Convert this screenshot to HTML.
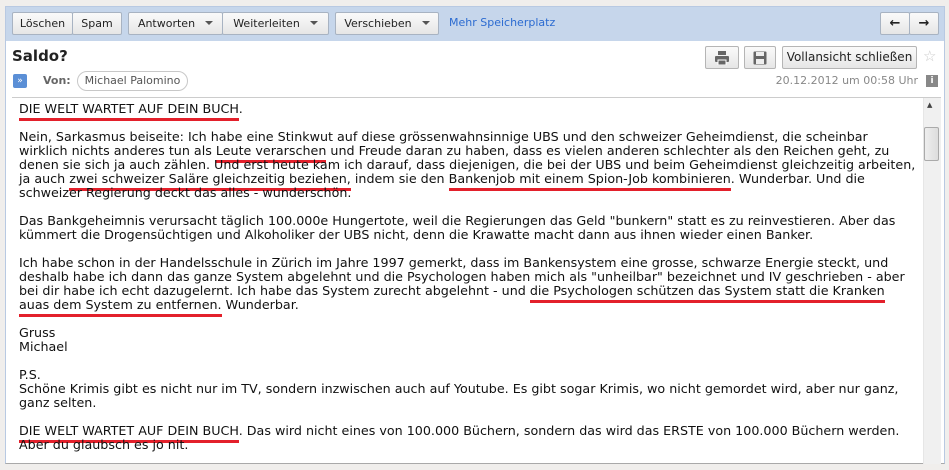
<!DOCTYPE html>
<html><head><meta charset="utf-8"><style>
*{margin:0;padding:0;box-sizing:border-box}
body{width:949px;height:470px;background:#f0eeec;position:relative;overflow:hidden;font-family:"DejaVu Sans","Liberation Sans",sans-serif;color:#222}
#frame{position:absolute;left:5px;top:6px;width:940px;height:458px;background:#fff;border:1px solid #b8c9e2;border-bottom:1px solid #a9a9a9}
#tb{position:absolute;left:0;top:0;width:938px;height:34px;background:#c6d6eb}
.btn{position:absolute;top:5px;height:23px;background:linear-gradient(#fafafa,#e6e6e6);border:1px solid #a8b3c2;font-size:11px;line-height:21px;color:#222;text-align:center;border-radius:2px}
.ar{display:inline-block;width:0;height:0;border-left:4px solid transparent;border-right:4px solid transparent;border-top:4px solid #555;margin-left:10px;vertical-align:2px}
.b2{position:absolute;height:23px;background:linear-gradient(#fafafa,#e6e6e6);border:1px solid #b5b5b5;border-radius:2px;font-size:11px;line-height:21px;text-align:center;color:#222}
.abs{position:absolute}
#body{position:absolute;left:13px;top:95px;font-size:12.7px;line-height:14px;white-space:nowrap;color:#111}
.u{padding-bottom:2px;border-bottom:3px solid #e3202b}
</style></head><body>
<div id="frame">
 <div id="tb">
  <div class="btn" style="left:6px;width:61px">Löschen</div>
  <div class="btn" style="left:66px;width:50px">Spam</div>
  <div class="btn" style="left:122px;width:95px">Antworten<span class="ar"></span></div>
  <div class="btn" style="left:216px;width:107px">Weiterleiten<span class="ar"></span></div>
  <div class="btn" style="left:329px;width:104px">Verschieben<span class="ar"></span></div>
  <div class="abs" style="left:443px;top:7px;font-size:11px;line-height:18px;color:#2b6bd1">Mehr Speicherplatz</div>
  <div class="btn" style="left:874px;width:30px;font-size:13px;font-weight:bold">&#x2190;</div>
  <div class="btn" style="left:903px;width:30px;font-size:13px;font-weight:bold">&#x2192;</div>
 </div>
 <div class="abs" style="left:6px;top:40px;font-size:15px;font-weight:bold;color:#222">Saldo?</div>
 <div class="b2" style="left:699px;top:39px;width:34px">
  <svg width="16" height="14" viewBox="0 0 16 14" style="margin-top:4px"><rect x="4" y="0" width="8" height="4" fill="#666"/><rect x="1" y="5" width="14" height="6" rx="1" fill="#666"/><rect x="4" y="9" width="8" height="5" fill="#666" stroke="#fff"/></svg>
 </div>
 <div class="b2" style="left:738px;top:39px;width:32px">
  <svg width="14" height="14" viewBox="0 0 14 14" style="margin-top:4px"><rect x="0.5" y="0.5" width="13" height="13" rx="1" fill="#666"/><rect x="3" y="1" width="8" height="4" fill="#eee"/><rect x="3" y="8" width="8" height="5" fill="#eee"/></svg>
 </div>
 <div class="b2" style="left:776px;top:39px;width:135px;font-size:12px">Vollansicht schließen</div>
 <div class="abs" style="left:917px;top:40px;font-size:15px;color:#ccc">&#9734;</div>
 <div class="abs" style="left:7px;top:67px;width:14px;height:14px;background:#5b8fd6;border-radius:2px;color:#fff;font-size:9px;line-height:14px;text-align:center">&#x00BB;</div>
 <div class="abs" style="left:37px;top:66px;font-size:11px;font-weight:bold;color:#666;line-height:16px">Von:</div>
 <div class="abs" style="left:71px;top:64px;width:111px;height:20px;border:1px solid #c8c8c8;border-radius:10px;font-size:11px;line-height:18px;text-align:center;color:#555">Michael Palomino</div>
 <div class="abs" style="left:700px;top:66px;width:212px;text-align:right;font-size:11px;line-height:16px;color:#888">20.12.2012 um 00:58 Uhr</div>
 <div class="abs" style="left:920px;top:68px;width:12px;height:12px;background:#888;color:#fff;font-size:9px;font-weight:bold;line-height:12px;text-align:center">i</div>
 <div class="abs" style="left:6px;top:90px;width:929px;height:1px;background:#ccc"></div>
 <div class="abs" style="left:917px;top:91px;width:18px;height:366px;background:#f0f0f0;border-left:1px solid #e6e6e6"></div>
 <div class="abs" style="left:921px;top:94px;font-size:7px;color:#444">&#9650;</div>
 <div class="abs" style="left:918px;top:120px;width:15px;height:34px;background:linear-gradient(90deg,#eee,#ddd);border:1px solid #aaa;border-radius:2px"></div>
 <div id="body">
<span class="u">DIE WELT WARTET AUF DEIN BUCH</span>.<br><br>
Nein, Sarkasmus beiseite: Ich habe eine Stinkwut auf diese grössenwahnsinnige UBS und den schweizer Geheimdienst, die scheinbar<br>
wirklich nichts anderes tun als <span class="u">Leute verarschen</span> und Freude daran zu haben, dass es vielen anderen schlechter als den Reichen geht, zu<br>
denen sie sich ja auch zählen. Und erst heute kam ich darauf, dass diejenigen, die bei der UBS und beim Geheimdienst gleichzeitig arbeiten,<br>
ja auch <span class="u">zwei schweizer Saläre gleichzeitig beziehen,</span> indem sie den <span class="u">Bankenjob mit einem Spion-Job kombinieren</span>. Wunderbar. Und die<br>
schweizer Regierung deckt das alles - wunderschön.<br><br>
Das Bankgeheimnis verursacht täglich 100.000e Hungertote, weil die Regierungen das Geld "bunkern" statt es zu reinvestieren. Aber das<br>
kümmert die Drogensüchtigen und Alkoholiker der UBS nicht, denn die Krawatte macht dann aus ihnen wieder einen Banker.<br><br>
Ich habe schon in der Handelsschule in Zürich im Jahre 1997 gemerkt, dass im Bankensystem eine grosse, schwarze Energie steckt, und<br>
deshalb habe ich dann das ganze System abgelehnt und die Psychologen haben mich als "unheilbar" bezeichnet und IV geschrieben - aber<br>
bei dir habe ich echt dazugelernt. Ich habe das System zurecht abgelehnt - und <span class="u">die Psychologen schützen das System statt die Kranken</span><br>
<span class="u">auas dem System zu entfernen.</span> Wunderbar.<br><br>
Gruss<br>Michael<br><br>
P.S.<br>
Schöne Krimis gibt es nicht nur im TV, sondern inzwischen auch auf Youtube. Es gibt sogar Krimis, wo nicht gemordet wird, aber nur ganz,<br>
ganz selten.<br><br>
<span class="u">DIE WELT WARTET AUF DEIN BUCH</span>. Das wird nicht eines von 100.000 Büchern, sondern das wird das ERSTE von 100.000 Büchern werden.<br>
Aber du glaubsch es jo nit.
 </div>
</div>
</body></html>
